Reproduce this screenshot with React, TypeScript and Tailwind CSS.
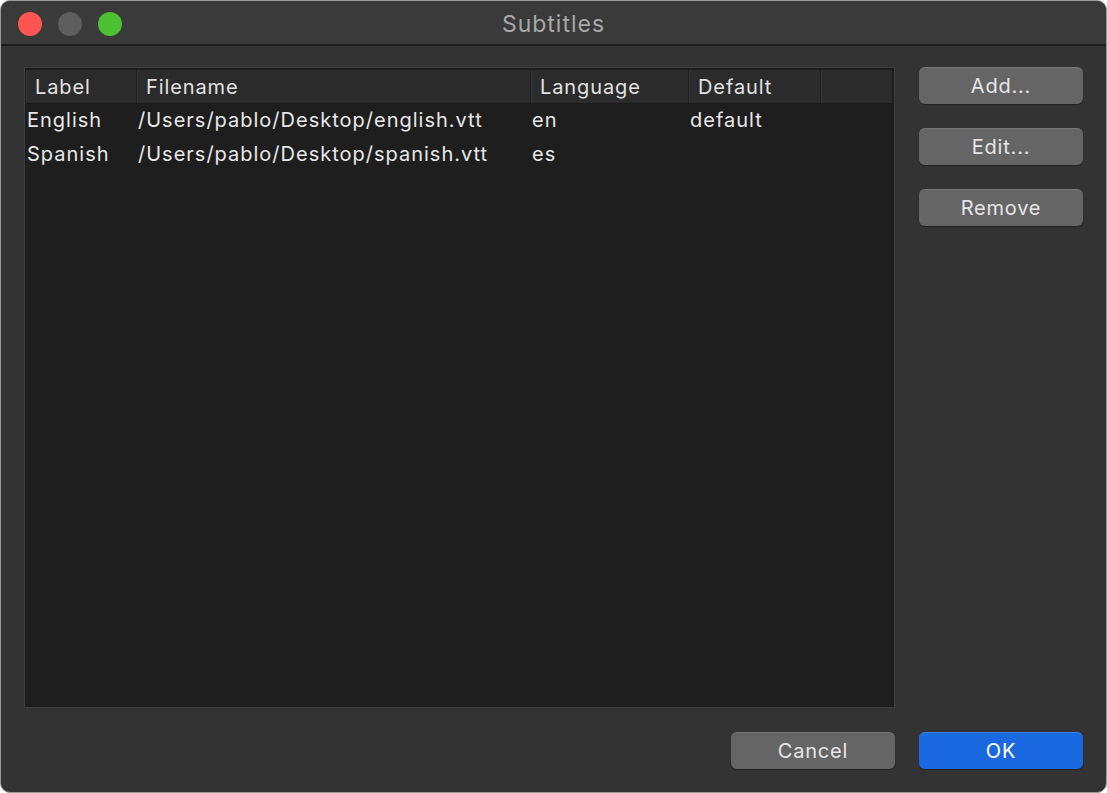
import React from 'react';

interface Track {
  label: string;
  filename: string;
  language: string;
  isDefault: boolean;
}

const tracks: Track[] = [
  { label: 'English', filename: '/Users/pablo/Desktop/english.vtt', language: 'en', isDefault: true },
  { label: 'Spanish', filename: '/Users/pablo/Desktop/spanish.vtt', language: 'es', isDefault: false },
];

const columns = [
  { title: 'Label', w: 'w-[111px]' },
  { title: 'Filename', w: 'w-[394px]' },
  { title: 'Language', w: 'w-[158px]' },
  { title: 'Default', w: 'w-[132px]' },
  { title: '', w: 'flex-1' },
];

function MacButton({ children, primary = false }: { children: React.ReactNode; primary?: boolean }) {
  return (
    <button
      className={`h-[37px] w-[164px] rounded-[6px] text-[20px] leading-none tracking-[0.8px] ${
        primary
          ? 'bg-[#1b69e1] text-white shadow-[inset_0_1px_0_rgba(255,255,255,0.15),0_1px_1px_rgba(0,0,0,0.35)]'
          : 'bg-[#656565] text-[#e6e6e6] shadow-[inset_0_1px_0_rgba(255,255,255,0.12),0_1px_1px_rgba(0,0,0,0.35)]'
      }`}
    >
      {children}
    </button>
  );
}

export default function App() {
  return (
    <div className="w-[1107px] h-[793px] bg-white" style={{ fontFamily: 'Inter, "Noto Sans", sans-serif' }}>
      <div className="w-full h-full rounded-[10px] border border-[#9a9a9a] bg-[#333333] overflow-hidden flex flex-col">
        {/* Title bar */}
        <div className="relative h-[45px] shrink-0 bg-[#3a3a3a] border-b-2 border-[#1c1c1c] flex items-center">
          <div className="flex items-center gap-[16px] pl-[17px] pt-[2px]">
            <span className="w-[24px] h-[24px] rounded-full bg-[#fe5552]" />
            <span className="w-[24px] h-[24px] rounded-full bg-[#5e5e5e]" />
            <span className="w-[24px] h-[24px] rounded-full bg-[#4bc133]" />
          </div>
          <div className="absolute inset-0 flex items-center justify-center pt-[4px] text-[23px] tracking-[1px] text-[#a8a8a8] pointer-events-none">
            Subtitles
          </div>
        </div>

        {/* Body */}
        <div className="flex-1 flex flex-col px-[23px] pt-[21px] pb-[23px]">
          <div className="flex-1 flex gap-[24px] min-h-0">
            {/* Table */}
            <div className="w-[871px] border border-[#3d3d3d] bg-[#1e1e1e] p-px flex flex-col">
              <div className="h-[34px] flex bg-[#2b2b2b] border-b border-[#1a1a1a] mt-px">
                {columns.map((c, i) => (
                  <div
                    key={i}
                    className={`${c.w} shrink-0 h-full flex items-center pl-[8px] pt-[1px] text-[20px] tracking-[0.9px] text-[#e2e2e2] border-l border-[#353535] border-r border-r-[#1f1f1f]`}
                  >
                    {c.title}
                  </div>
                ))}
              </div>
              {tracks.map((t) => (
                <div key={t.label} className="h-[34px] flex items-center pb-[3px] text-[20px] tracking-[1px] text-[#e8e8e8]">
                  <div className="w-[111px] shrink-0 pl-[1px]">{t.label}</div>
                  <div className="w-[394px] shrink-0 pl-[1px]">{t.filename}</div>
                  <div className="w-[158px] shrink-0 pl-[1px]">{t.language}</div>
                  <div className="w-[132px] shrink-0 pl-[1px]">{t.isDefault ? 'default' : ''}</div>
                </div>
              ))}
            </div>

            {/* Side buttons */}
            <div className="flex flex-col gap-[24px]">
              <MacButton>Add...</MacButton>
              <MacButton>Edit...</MacButton>
              <MacButton>Remove</MacButton>
            </div>
          </div>

          <div className="flex justify-end gap-[24px] pt-[24px]">
            <MacButton>Cancel</MacButton>
            <MacButton primary>OK</MacButton>
          </div>
        </div>
      </div>
    </div>
  );
}
